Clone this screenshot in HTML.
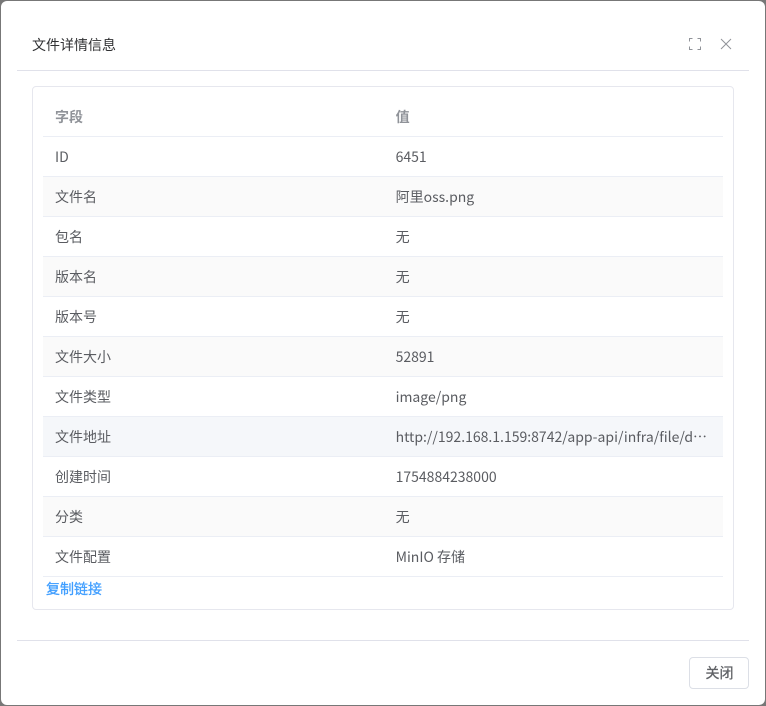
<!DOCTYPE html>
<html lang="zh">
<head>
<meta charset="utf-8">
<title>文件详情信息</title>
<style>
html,body{margin:0;padding:0;width:766px;height:706px;overflow:hidden;background:#777;}
body{font-family:"Noto Sans CJK SC","Liberation Sans",sans-serif;font-size:14px;color:#5a5c61;position:relative;}
.dlg{position:absolute;left:1px;top:1px;width:764px;height:704px;background:#fff;border-radius:6px;}
.title{left:32px;top:35px;line-height:20px;font-size:14px;color:#303133;position:absolute;}
.hl{position:absolute;left:17px;width:732px;height:1px;background:#e0e1ea;}
.card{position:absolute;left:32px;top:86px;width:700px;height:522px;border:1px solid #e6e7ee;border-radius:4px;background:#fff;}
.row{position:absolute;left:43px;width:680px;height:39px;border-bottom:1px solid #ebeef5;line-height:40px;}
.row span{position:absolute;top:0;white-space:nowrap;}
.row .a{left:12px;}
.row .b{left:352.6px;width:315px;overflow:hidden;text-overflow:ellipsis;}
.th{color:#909399;font-weight:700;}
.s{background:#fafafa;}
.h{background:#f5f7fa;}
.link{position:absolute;left:46px;top:579px;line-height:20px;color:#409eff;-webkit-text-stroke:0.3px #409eff;}
.btn{position:absolute;left:689px;top:657px;width:58px;height:30px;border:1px solid #dcdfe6;border-radius:4px;background:#fff;text-align:center;text-indent:1px;line-height:30px;color:#606266;-webkit-text-stroke:0.3px #606266;}
svg{position:absolute;}
</style>
</head>
<body>
<div class="dlg"></div>
<div class="title">文件详情信息</div>
<svg style="left:688px;top:37px" width="14" height="14" viewBox="0 0 14 14" fill="none" stroke="#909399" stroke-width="1"><path d="M1.5 4.5V1.5H4.5M9.5 1.5H12.5V4.5M12.5 9.5V12.5H9.5M4.5 12.5H1.5V9.5"/></svg>
<svg style="left:719px;top:37px" width="14" height="14" viewBox="0 0 14 14" fill="none" stroke="#909399" stroke-width="1"><path d="M2 2L12 12M12 2L2 12"/></svg>
<div class="hl" style="top:70px"></div>
<div class="card"></div>
<div class="row th" style="top:97px"><span class="a">字段</span><span class="b">值</span></div>
<div class="row" style="top:137px"><span class="a">ID</span><span class="b">6451</span></div>
<div class="row s" style="top:177px"><span class="a">文件名</span><span class="b">阿里oss.png</span></div>
<div class="row" style="top:217px"><span class="a">包名</span><span class="b">无</span></div>
<div class="row s" style="top:257px"><span class="a">版本名</span><span class="b">无</span></div>
<div class="row" style="top:297px"><span class="a">版本号</span><span class="b">无</span></div>
<div class="row s" style="top:337px"><span class="a">文件大小</span><span class="b">52891</span></div>
<div class="row" style="top:377px"><span class="a">文件类型</span><span class="b">image/png</span></div>
<div class="row h" style="top:417px"><span class="a">文件地址</span><span class="b">http://192.168.1.159:8742/app-api/infra/file/download/abc</span></div>
<div class="row" style="top:457px"><span class="a">创建时间</span><span class="b">1754884238000</span></div>
<div class="row s" style="top:497px"><span class="a">分类</span><span class="b">无</span></div>
<div class="row" style="top:537px"><span class="a">文件配置</span><span class="b">MinIO 存储</span></div>
<div class="link">复制链接</div>
<div class="hl" style="top:640px"></div>
<div class="btn">关闭</div>
</body>
</html>
